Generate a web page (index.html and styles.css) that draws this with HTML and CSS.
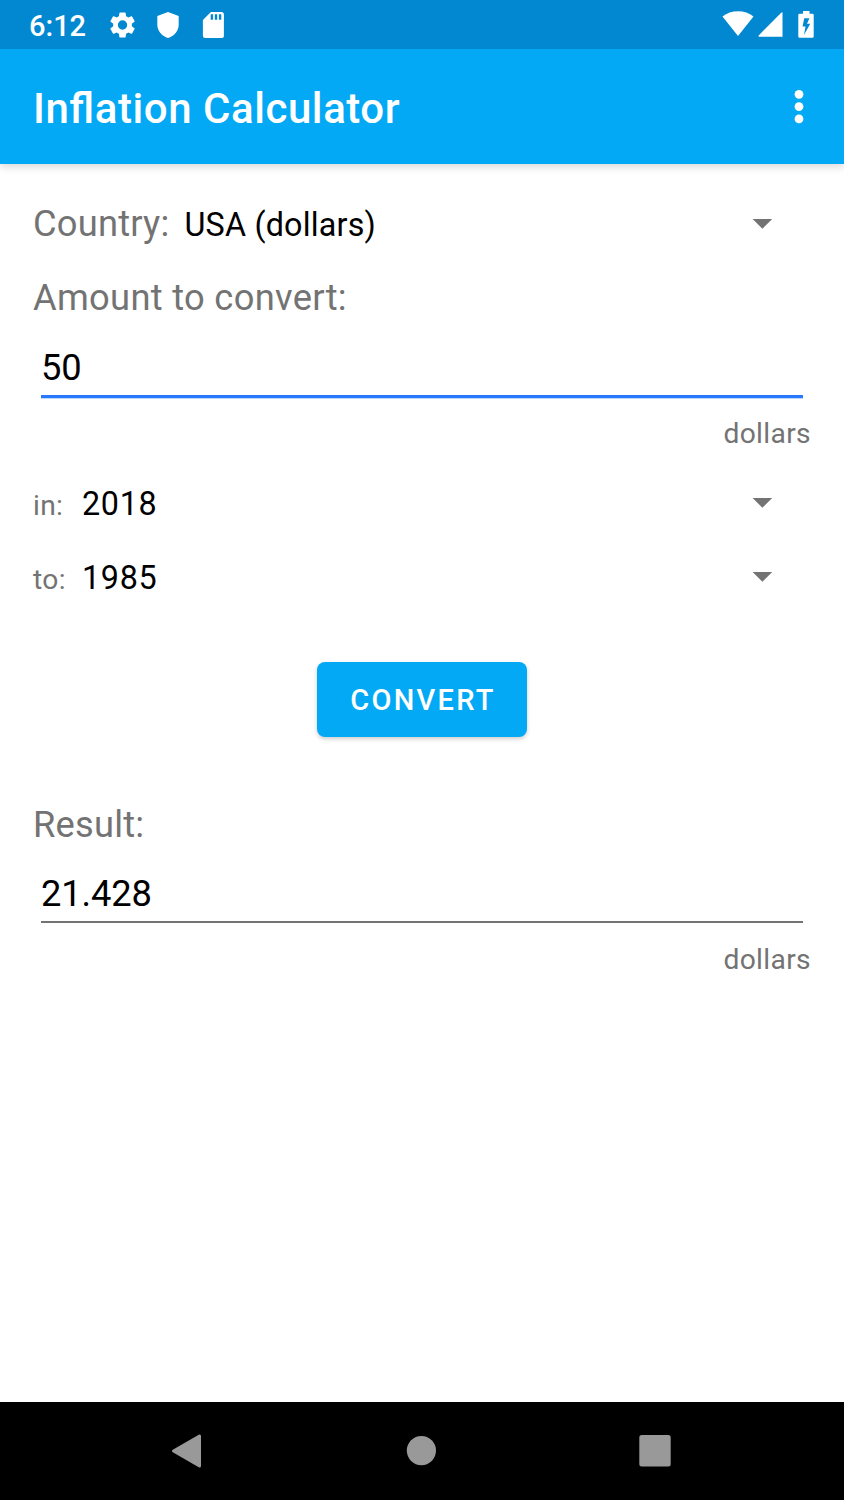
FILE: index.html
```html
<!DOCTYPE html>
<html lang="en">
<head>
<meta charset="utf-8">
<title>Inflation Calculator</title>
<link rel="stylesheet" href="styles.css">
</head>
<body>
<div class="screen">
  <div class="status">
    <span class="clock">6:12</span>
    <svg class="gear" viewBox="1.6 2 20 20" width="26" height="26"><path fill="#fff" d="M19.14 12.94c.04-.3.06-.61.06-.94s-.02-.64-.07-.94l2.03-1.58a.5.5 0 0 0 .12-.61l-1.92-3.32a.49.49 0 0 0-.59-.22l-2.39.96a7 7 0 0 0-1.62-.94l-.36-2.54A.48.48 0 0 0 13.920 2.400h-3.840a.48.48 0 0 0-.47.41l-.36 2.540a7.200 7.200 0 0 0-1.620.94l-2.390-.96a.48.48 0 0 0-.59.22L2.740 8.870a.48.48 0 0 0 .12.61l2.030 1.580c-.05.3-.09.63-.09.94s.02.64.07.94l-2.030 1.580a.5.5 0 0 0-.12.61l1.920 3.320c.12.22.37.29.59.22l2.390-.96c.5.38 1.030.7 1.620.94l.36 2.540c.05.24.24.41.48.41h3.840c.24 0 .44-.17.47-.41l.36-2.540a7 7 0 0 0 1.620-.94l2.390.96c.22.08.47 0 .59-.22l1.920-3.320a.48.48 0 0 0-.12-.61zM12 15.600a3.600 3.600 0 1 1 0-7.200 3.600 3.600 0 0 1 0 7.200z"/></svg>
    <svg class="shield" viewBox="0 0 22 26" width="22" height="26"><path fill="#fff" d="M11 0 21.700 4v8.500C21.700 19 17 24.300 11 26 5 24.300.3 19 .3 12.500V4z"/></svg>
    <svg class="sd" viewBox="-.4 0 22 26" width="22" height="26"><path fill="#fff" fill-rule="evenodd" d="M8.500 0H19a2.500 2.500 0 0 1 2.500 2.500v21A2.300 2.300 0 0 1 19.200 26H2.800A2.300 2.300 0 0 1 .5 23.700V8zM8.300 2.300v5.400h2.400v-5.400zm4.100 0v5.400h2.400v-5.400zm4.100 0v5.400h2.400v-5.400z"/></svg>
    <svg class="wifi" viewBox="0 0 32 25" width="32" height="25"><path fill="#fff" d="M.5 5.500C5 2 10 .3 16 .3S27 2 31.500 5.500L16 25z"/></svg>
    <svg class="signal" viewBox="0 0 25 25" width="25" height="25"><path fill="#fff" d="M24.500.5V24.700H1.300C.3 24.700.2 24 .7 23.400L23.200.8c.6-.6 1.300-.8 1.300-.3z"/></svg>
    <svg class="battery" viewBox="0 0 16 27" width="16" height="27"><path fill="#fff" fill-rule="evenodd" d="M5 0h6.500v2.700h2.800A1.400 1.400 0 0 1 15.700 4.100v21.300a1.400 1.400 0 0 1-1.400 1.400H1.700A1.400 1.400 0 0 1 .3 25.400V4.100A1.400 1.400 0 0 1 1.700 2.700H5zM6.200 7.300 4.600 15.500h2.900L6 24l6.200-11.200H9L11.400 7.300z"/></svg>
  </div>
  <div class="appbar">
    <h1 class="title">Inflation Calculator</h1>
    <svg viewBox="0 0 10 34" width="10" height="34"><g fill="#fff"><circle cx="5" cy="4.300" r="4.400"/><circle cx="5" cy="16.600" r="4.400"/><circle cx="5" cy="28.900" r="4.400"/></g></svg>
  </div>
  <main class="content">
    <div class="row country"><span class="label">Country:</span><span class="value">USA (dollars)</span><svg class="arrow" viewBox="0 0 20 10" width="20" height="10"><path d="M-.4 0h19.600L9.400 9.800z"/></svg></div>
    <div class="label amount">Amount to convert:</div>
    <div class="field active">50</div>
    <div class="unit">dollars</div>
    <div class="row year"><span class="small">in:</span><span class="value">2018</span><svg class="arrow" viewBox="0 0 20 10" width="20" height="10"><path d="M-.4 0h19.600L9.400 9.800z"/></svg></div>
    <div class="row year"><span class="small">to:</span><span class="value">1985</span><svg class="arrow" viewBox="0 0 20 10" width="20" height="10"><path d="M-.4 0h19.600L9.400 9.800z"/></svg></div>
    <button class="convert">CONVERT</button>
    <div class="label result">Result:</div>
    <div class="field">21.428</div>
    <div class="unit">dollars</div>
  </main>
  <nav class="nav">
    <svg class="back" viewBox="0 0 30 34" width="30" height="34"><path fill="#999" stroke="#999" stroke-width="3" stroke-linejoin="round" d="M28.500 2v30L2.500 17z"/></svg>
    <svg class="home" viewBox="0 0 30 30" width="30" height="30"><circle cx="15.400" cy="14.600" r="14.600" fill="#999"/></svg>
    <svg class="recent" viewBox="0 0 32 32" width="32" height="32"><rect x=".3" y=".1" width="31.400" height="31.400" rx="2.500" fill="#999"/></svg>
  </nav>
</div>
</body>
</html>
```
FILE: styles.css
```css
* { box-sizing: border-box; }
body { margin: 0; font-family: Roboto, sans-serif; background: #fff; color: #000; }
svg { display: block; flex: none; overflow: visible; }
.screen { width: 844px; height: 1500px; display: flex; flex-direction: column; }
.status { position: relative; z-index: 1; height: 49px; background: #0288d1; display: flex; align-items: flex-start; padding: 11px 30px 0 29px; color: #fff; }
.clock { width: 80px; font-size: 29px; font-weight: 500; line-height: 30px; }
.gear { margin-top: 1px; }
.shield { margin: 1px 0 0 22px; }
.sd { margin: 1px 0 0 23px; }
.wifi { margin-left: auto; }
.signal { margin: 1px 0 0 4px; }
.battery { margin-left: 15px; }
.appbar { height: 115px; background: #03a9f4; display: flex; align-items: center; padding: 0 40px 0 33px; justify-content: space-between; box-shadow: 0 3px 8px rgba(0,0,0,.15); color: #fff; }
.title { margin: 4px 0 0; font-size: 42px; font-weight: 500; line-height: 48px; letter-spacing: .55px; font-feature-settings: "liga" 1; white-space: nowrap; }
.content { flex: 1; padding: 22px 33px 0; display: flex; flex-direction: column; }
.row { height: 74px; display: flex; align-items: center; }
.label { font-size: 36.300px; letter-spacing: .3px; color: #737373; line-height: 76px; height: 74px; white-space: nowrap; }
.value { font-size: 32.300px; letter-spacing: .7px; line-height: 76px; height: 74px; white-space: nowrap; }
.country .label { letter-spacing: .2px; }
.country .value { margin: 2px 0 0 15px; letter-spacing: .2px; }
.small { width: 49px; font-size: 28.200px; letter-spacing: .35px; color: #737373; padding-top: 4px; }
.arrow { margin: 1px 38px 0 auto; fill: #737373; }
.year .arrow { margin-top: -1px; }
.field { height: 57px; margin: 0 8px; font-size: 36.300px; letter-spacing: -.15px; line-height: 55px; border-bottom: 2px solid #737373; }
.field.active { height: 58px; margin-top: 6px; border-bottom: 3px solid #2979ff; box-shadow: 0 1px 0 rgba(41,121,255,.3); }
.unit { height: 36px; margin-top: 19px; font-size: 28.200px; letter-spacing: .35px; line-height: 36px; color: #737373; text-align: right; }
.active + .unit { margin-top: 18px; margin-bottom: 14px; }
.convert { align-self: center; width: 210px; height: 75px; margin-top: 48px; padding: 0 0 0 2px; border: 0; border-radius: 8px; background: #03a9f4; color: #fff; font: 500 29px Roboto, sans-serif; letter-spacing: 2.300px; box-shadow: 0 2px 4px rgba(0,0,0,.2); flex: none; }
.result { margin-top: 50px; margin-bottom: 5px; letter-spacing: .2px; }
.nav { height: 98px; background: #000; display: flex; align-items: center; padding-left: 171px; }
.home { margin-left: 205px; }
.recent { margin-left: 203px; }
```
